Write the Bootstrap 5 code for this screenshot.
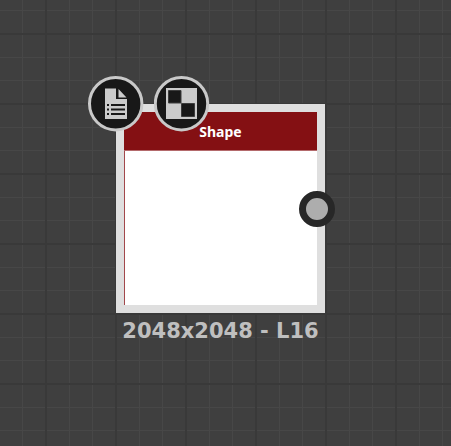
<!DOCTYPE html>
<html lang="en">
<head>
<meta charset="utf-8">
<meta name="viewport" content="width=device-width, initial-scale=1">
<title>Shape node</title>
<link href="https://cdn.jsdelivr.net/npm/bootstrap@5.3.0/dist/css/bootstrap.min.css" rel="stylesheet">
<style>
  /* Graph canvas: 70px major cells, each divided in three */
  .graph {
    background-color: #3f3f3f;
    background-image:
      linear-gradient(90deg, #393939 2px, transparent 2px),
      linear-gradient(#393939 2px, transparent 2px),
      linear-gradient(90deg, transparent 24px, #474747 24px, #474747 25px, transparent 25px, transparent 47px, #474747 47px, #474747 48px, transparent 48px),
      linear-gradient(transparent 24px, #474747 24px, #474747 25px, transparent 25px, transparent 47px, #474747 47px, #474747 48px, transparent 48px);
    background-size: 70px 70px;
    background-position: 45px 33px;
  }
  .node { left: 116px; top: 104px; width: 209px; }
  .node-body { height: 209px; border: 8px solid #dfdfdf; }
  .node-title {
    height: 39px;
    padding-top: 2px;
    background: #841013;
    border-bottom: 1px solid #b46a6c;
    font: bold 14px/20px "Noto Sans", "Open Sans", sans-serif;
  }
  .node-preview { border-left: 1px solid #a2484b; }
  .node-badges { left: -28px; top: -28px; gap: 10px; }
  .node-badge { width: 56px; height: 56px; }
  .node-port {
    width: 36px; height: 36px; right: -10px; top: 87px;
    background: #adadad; border: 7px solid #272727;
  }
  .node-info {
    color: #bfbfbf;
    font: bold 21px/36px "DejaVu Sans", Verdana, sans-serif;
  }
</style>
</head>
<body>
<main class="graph min-vh-100 position-relative overflow-hidden">
  <section class="node position-absolute" aria-label="Shape node">
    <div class="node-body d-flex flex-column bg-white">
      <h1 class="node-title d-flex align-items-center justify-content-center text-white m-0 flex-shrink-0">Shape</h1>
      <div class="node-preview flex-grow-1"></div>
    </div>
    <div class="node-badges position-absolute d-flex">
      <button type="button" class="node-badge btn p-0 border-0 rounded-circle d-flex" aria-label="Node document">
        <svg width="56" height="56" viewBox="0 0 56 56" aria-hidden="true">
          <circle cx="27.7" cy="27.7" r="26.2" fill="#181818" stroke="#c9c9c9" stroke-width="3"/>
          <path fill="#cbcbcb" d="M17 12.500H28V23H39V43H17ZM30.500 13L38.500 21.500H30.500Z"/>
          <path fill="#181818" d="M19 28h2v2h-2zM23 28h14v2H23zM19 32.500h2v2h-2zM23 32.500h14v2H23zM19 37h2v2h-2zM23 37h14v2H23z"/>
        </svg>
      </button>
      <button type="button" class="node-badge btn p-0 border-0 rounded-circle d-flex" aria-label="Preview background">
        <svg width="56" height="56" viewBox="0 0 56 56" aria-hidden="true">
          <circle cx="27.500" cy="27.7" r="26.2" fill="#181818" stroke="#c9c9c9" stroke-width="3"/>
          <path fill="#cbcbcb" d="M12 12h31v31H12z"/>
          <path fill="#181818" stroke="#3c3c3c" stroke-width="1" d="M14.500 14.500h12.500v12.500h-12.500zM27.500 27.500h13v13h-13z"/>
        </svg>
      </button>
    </div>
    <button type="button" class="node-port btn p-0 rounded-circle position-absolute" aria-label="Output"></button>
    <div class="node-info text-center text-nowrap">2048x2048 - L16</div>
  </section>
</main>
<script src="https://cdn.jsdelivr.net/npm/bootstrap@5.3.0/dist/js/bootstrap.bundle.min.js"></script>
</body>
</html>
